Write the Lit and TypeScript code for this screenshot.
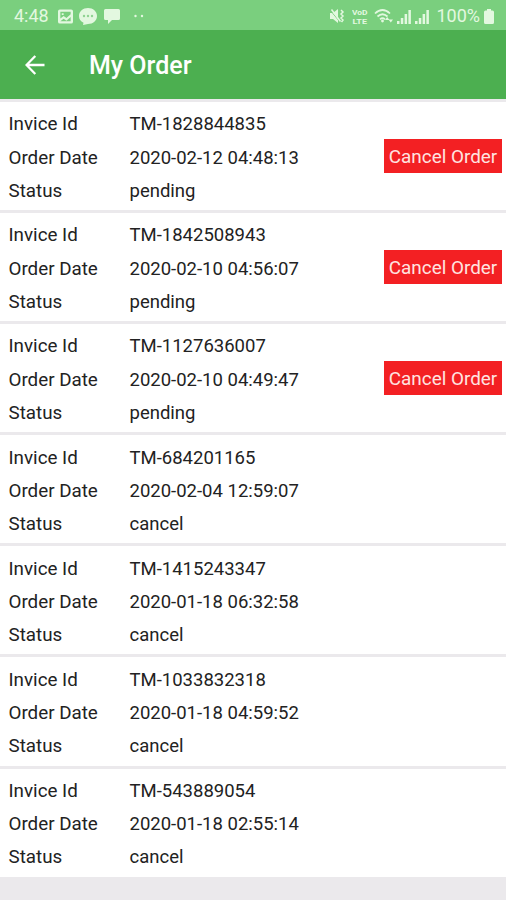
import { LitElement, html, css, svg, nothing } from "lit";
import { customElement, property } from "lit/decorators.js";

interface Order {
  id: string;
  date: string;
  status: string;
}

const orders: Order[] = [
  { id: "TM-1828844835", date: "2020-02-12 04:48:13", status: "pending" },
  { id: "TM-1842508943", date: "2020-02-10 04:56:07", status: "pending" },
  { id: "TM-1127636007", date: "2020-02-10 04:49:47", status: "pending" },
  { id: "TM-684201165", date: "2020-02-04 12:59:07", status: "cancel" },
  { id: "TM-1415243347", date: "2020-01-18 06:32:58", status: "cancel" },
  { id: "TM-1033832318", date: "2020-01-18 04:59:52", status: "cancel" },
  { id: "TM-543889054", date: "2020-01-18 02:55:14", status: "cancel" },
];

@customElement("status-bar")
class StatusBar extends LitElement {
  static styles = css`
    :host {
      display: flex;
      align-items: center;
      justify-content: space-between;
      box-sizing: border-box;
      height: 30px;
      padding: 2px 12px 0 14px;
      background: #7acf7e;
      color: #e3f8e0;
      font-size: 18px;
      line-height: 28px;
    }
    .left, .right { display: flex; align-items: center; }
    svg { display: block; fill: currentColor; }
    .time { width: 44px; }
    .image { margin-right: 6px; }
    .chat { margin-right: 7px; }
    .msg { margin-right: 13px; }
    .mute { margin-right: 7px; }
    .volte { margin-right: 6px; }
    .wifi { margin-right: 3px; }
    .signal { margin-right: 4px; }
    .percent { margin: 0 4px 0 3px; font-size: 18px; }
  `;

  private signal() {
    return svg`<svg class="signal" width="14" height="15" viewBox="0 0 14 15">
      <path d="M0 12h2.500v3H0zM3.800 9h2.500v6H3.800zM7.600 5h2.500v10H7.600zM11.400 1h2.500v14h-2.500z" />
    </svg>`;
  }

  render() {
    return html`
      <div class="left">
        <span class="time">4:48</span>
        <svg class="image" width="15" height="15" viewBox="0 0 16 15">
          <path fill-rule="evenodd" d="M2 0h12q2 0 2 2v11q0 2-2 2H2q-2 0-2-2V2q0-2 2-2zM2.500 2.500v7l3.500-2.500 3 2 4.500-4V2.500zM4 4h2v2H4zM2.500 12.500h11V8l-4.500 4-3-2z" />
        </svg>
        <svg class="chat" width="18" height="17" viewBox="0 0 18 17">
          <path d="M9 0c5 0 9 3.500 9 8s-4 8-9 8l-5 1 .5-2.300C1.500 13.500 0 11 0 8c0-4.500 4-8 9-8z" />
          <g fill="#8fd392"><circle cx="5" cy="8" r="1.200" /><circle cx="9" cy="8" r="1.200" /><circle cx="13" cy="8" r="1.200" /></g>
        </svg>
        <svg class="msg" width="16" height="16" viewBox="0 0 16 16">
          <path d="M1.500 1h13q1.500 0 1.500 1.500v8q0 1.500-1.500 1.500H8l-4 4v-4H1.500Q0 12 0 10.500v-8Q0 1 1.500 1z" />
        </svg>
        <svg width="12" height="4" viewBox="0 0 12 4">
          <circle cx="2.500" cy="2" r="1.200" /><circle cx="9" cy="2" r="1.200" />
        </svg>
      </div>
      <div class="right">
        <svg class="mute" width="15" height="16" viewBox="0 0 15 16">
          <path d="M0 5h3l5-4v14l-5-4H0z" />
          <path d="M.5 2.500l9 11" stroke="#7acf7e" stroke-width="1" />
          <path d="M1.500 1.500l9 12M11 2l2 2-2 2 2 2-2 2 2 2-1.500 2" fill="none" stroke="currentColor" stroke-width="1.500" />
        </svg>
        <svg class="volte" width="16" height="17" viewBox="0 0 16 17">
          <g font-family="Roboto, sans-serif" font-weight="700" font-size="7">
            <text x="0" y="6.500" textLength="15.500" lengthAdjust="spacingAndGlyphs">VoD</text>
            <text x="0.500" y="15.500" textLength="14.500" lengthAdjust="spacingAndGlyphs">LTE</text>
          </g>
        </svg>
        <svg class="wifi" width="20" height="16" viewBox="0 0 20 16">
          <path d="M1 5.500q7.500-7 15 0M3.500 8.500q5-4.500 10 0M6 11.300q2.500-2.300 5 0" fill="none" stroke="currentColor" stroke-width="1.700" />
          <circle cx="8.500" cy="13" r="1.400" />
          <path d="M11 12l2.200-3 2.200 3zM14.500 11.500h4.500l-2.200 3z" />
        </svg>
        ${this.signal()}${this.signal()}
        <span class="percent">100%</span>
        <svg width="10" height="15" viewBox="0 0 10 15">
          <path d="M3 0h4v1.500h1.500q1.500 0 1.500 1.500v10.500q0 1.500-1.500 1.500h-7Q0 15 0 13.500V3Q0 1.500 1.500 1.500H3z" />
        </svg>
      </div>
    `;
  }
}

@customElement("app-header")
class AppHeader extends LitElement {
  static styles = css`
    :host {
      display: flex;
      align-items: center;
      box-sizing: border-box;
      height: 69px;
      padding: 1px 0 0 25px;
      background: #4caf50;
      color: #fff;
    }
    svg { display: block; margin: 0 44px 1px 0; }
    .title { margin: 1px 0 0; font-size: 25px; font-weight: 500; line-height: 30px; }
  `;
  render() {
    return html`
      <svg width="20" height="20" viewBox="0 0 20 20" fill="none" stroke="#fff" stroke-width="2.300">
        <path d="M19.500 10H2M10.300 1L1.500 10l8.800 9" />
      </svg>
      <h1 class="title">My Order</h1>
    `;
  }
}

@customElement("order-row")
class OrderRow extends LitElement {
  @property({ attribute: false }) order!: Order;
  static styles = css`
    :host {
      display: flex;
      align-items: center;
      justify-content: space-between;
      box-sizing: border-box;
      height: 108.100px;
      padding: 0 4px 0 8.500px;
      background: #fff;
      color: #222;
    }
    .fields {
      display: grid;
      grid-template-columns: 121px auto;
      grid-auto-rows: 33.300px;
      align-items: center;
      margin: 3px 0 0;
    }
    dt, dd { margin: 0; white-space: nowrap; }
    dt { font-size: 18.800px; }
    .cancel {
      height: 34px;
      width: 118px;
      margin: 0;
      padding: 1px 0 0;
      border: 0;
      border-radius: 0;
      background: #f32023;
      color: #ffe4e0;
      font: inherit;
      font-size: 18.900px;
      white-space: nowrap;
    }
  `;
  render() {
    const { id, date, status } = this.order;
    return html`
      <dl class="fields">
        <dt>Invice Id</dt><dd>${id}</dd>
        <dt>Order Date</dt><dd>${date}</dd>
        <dt>Status</dt><dd>${status}</dd>
      </dl>
      ${status === "pending" ? html`<button class="cancel">Cancel Order</button>` : nothing}
    `;
  }
}

@customElement("app-root")
class AppRoot extends LitElement {
  static styles = css`
    :host {
      display: block;
      height: 900px;
      overflow: hidden;
      background: #ebe9ec;
      font-family: Roboto, "Noto Sans", sans-serif;
      font-size: 18.500px;
    }
    .list {
      display: flex;
      flex-direction: column;
      gap: 3px;
      padding-top: 3px;
    }
  `;
  render() {
    return html`
      <status-bar></status-bar>
      <app-header></app-header>
      <main class="list">${orders.map((o) => html`<order-row .order=${o}></order-row>`)}</main>
    `;
  }
}
